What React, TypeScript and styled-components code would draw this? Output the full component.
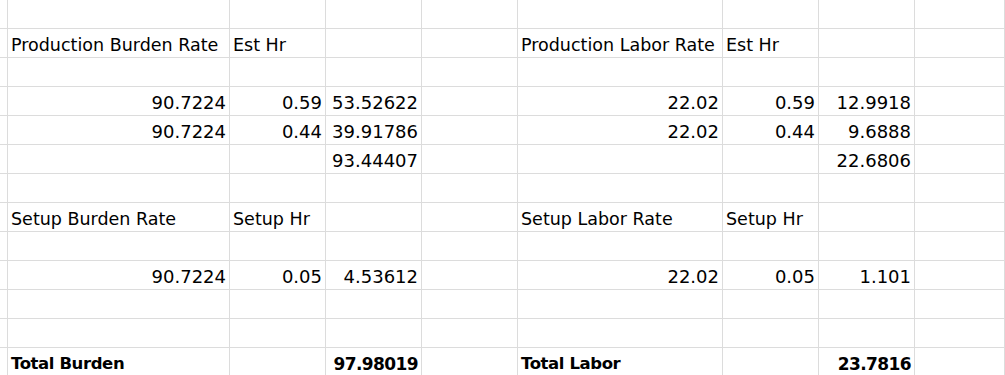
import React from "react";
import styled, { createGlobalStyle } from "styled-components";

const GlobalStyle = createGlobalStyle`
  html, body {
    margin: 0;
    padding: 0;
    background: #ffffff;
    overflow: hidden;
  }
`;

const Sheet = styled.div`
  display: grid;
  grid-template-columns: 8px 222px 96px 96px 96px 205px 96px 96px 1fr;
  grid-auto-rows: 29px;
  width: 1005px;
  font-family: "DejaVu Sans", "Liberation Sans", sans-serif;
  color: #000000;
`;

const Cell = styled.div<{ $num?: boolean; $bold?: boolean }>`
  box-sizing: border-box;
  border-right: 1px solid #dcdcdc;
  border-bottom: 1px solid #dcdcdc;
  display: flex;
  align-items: flex-end;
  justify-content: ${(p) => (p.$num ? "flex-end" : "flex-start")};
  padding: 0 3px 2px 3px;
  line-height: 20px;
  white-space: nowrap;
  font-size: 17.5px;
  font-weight: 400;
`;

const NumCell = styled(Cell)`
  font-size: 18px;
`;

const TotalCell = styled(Cell)`
  font-size: ${(p) => (p.$num ? "17px" : "16.5px")};
  font-weight: 700;
  letter-spacing: ${(p) => (p.$num ? "-0.6px" : "-0.4px")};
`;

type Row = (string | number | null)[];

// columns A..H after the narrow leading one (H stays empty)
const rows: Row[] = [
  [],
  ["Production Burden Rate", "Est Hr", null, null, "Production Labor Rate", "Est Hr"],
  [],
  [90.7224, 0.59, 53.52622, null, 22.02, 0.59, 12.9918],
  [90.7224, 0.44, 39.91786, null, 22.02, 0.44, 9.6888],
  [null, null, 93.44407, null, null, null, 22.6806],
  [],
  ["Setup Burden Rate", "Setup Hr", null, null, "Setup Labor Rate", "Setup Hr"],
  [],
  [90.7224, 0.05, 4.53612, null, 22.02, 0.05, 1.101],
  [],
  [],
  ["Total Burden", null, 97.98019, null, "Total Labor", null, 23.7816],
];

const COLS = 8;

export default function App() {
  return (
    <>
      <GlobalStyle />
      <Sheet>
        {rows.map((row, r) => {
          const total = r === rows.length - 1;
          const cells = [<Cell key={`${r}-lead`} />];
          for (let c = 0; c < COLS; c++) {
            const v = row[c];
            const isNum = typeof v === "number";
            const text = v === null || v === undefined ? "" : String(v);
            const Kind = total ? TotalCell : isNum ? NumCell : Cell;
            cells.push(
              <Kind key={`${r}-${c}`} $num={isNum}>
                {text}
              </Kind>
            );
          }
          return cells;
        })}
      </Sheet>
    </>
  );
}
